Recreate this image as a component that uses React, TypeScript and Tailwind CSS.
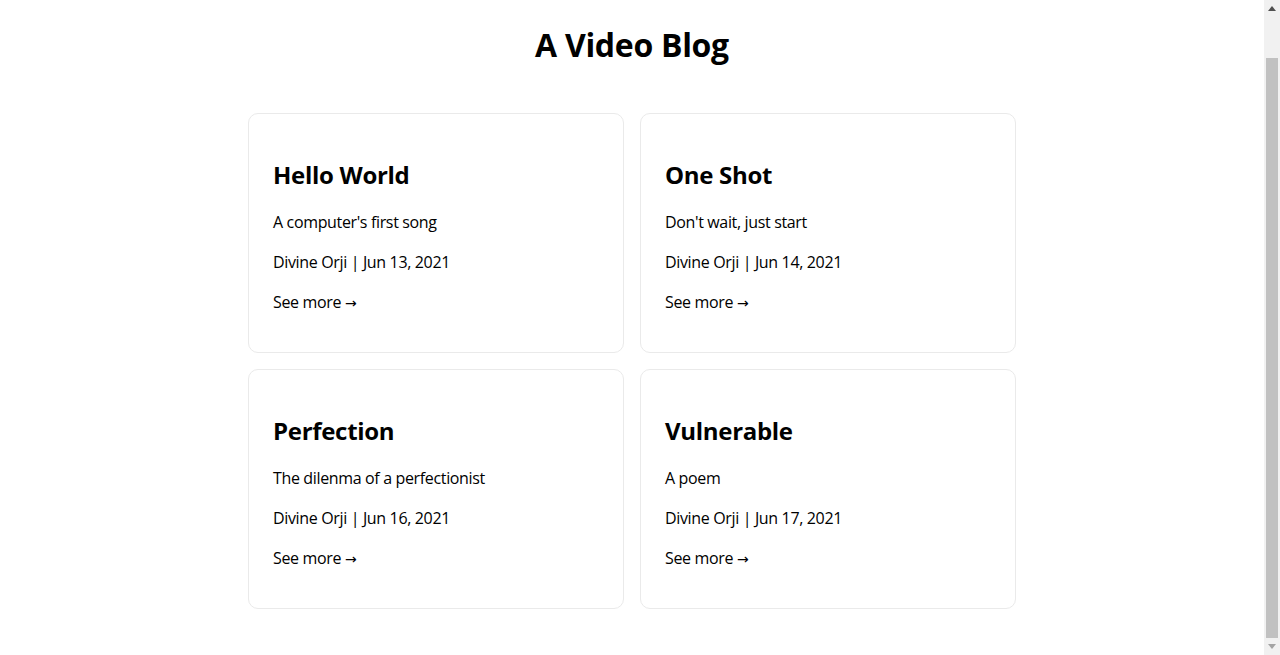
const posts = [
  { title: "Hello World", desc: "A computer's first song", date: "Jun 13, 2021" },
  { title: "One Shot", desc: "Don't wait, just start", date: "Jun 14, 2021" },
  { title: "Perfection", desc: "The dilenma of a perfectionist", date: "Jun 16, 2021" },
  { title: "Vulnerable", desc: "A poem", date: "Jun 17, 2021" },
];

function Scrollbar() {
  return (
    <div className="flex h-full w-4 shrink-0 flex-col bg-[#f1f1f1]">
      <div className="flex h-[17px] items-center justify-center">
        <svg width="8" height="5" viewBox="0 0 8 5">
          <path d="M4 0 L8 5 L0 5 Z" fill="#505050" />
        </svg>
      </div>
      <div className="h-[41px]" />
      <div className="mx-[2px] flex-1 bg-[#c1c1c1]" />
      <div className="flex h-[17px] items-center justify-center">
        <svg width="8" height="5" viewBox="0 0 8 5">
          <path d="M0 0 L8 0 L4 5 Z" fill="#a3a3a3" />
        </svg>
      </div>
    </div>
  );
}

export default function App() {
  return (
    <div className="flex h-screen bg-white font-['Open_Sans',sans-serif] text-black">
      <main className="flex flex-1 flex-col items-center overflow-hidden pt-[21px]">
        <h1 className="text-[32px] font-bold leading-[48px] tracking-[-0.3px]">
          A Video Blog
        </h1>
        <div className="mt-[44px] grid w-[768px] grid-cols-2 gap-4">
          {posts.map((post) => (
            <div
              key={post.title}
              className="rounded-[10px] border border-[#eaeaea] p-6"
            >
              <h2 className="mt-[22px] mb-5 text-2xl font-bold leading-[30px] tracking-[-0.3px]">
                {post.title}
              </h2>
              <div className="text-base leading-6 tracking-[-0.35px]">
                <p className="mb-4">{post.desc}</p>
                <p className="mb-4">Divine Orji | {post.date}</p>
                <p className="mb-[13px]">
                  See more{" "}
                  <span className="font-['DejaVu_Sans',sans-serif] text-[14px]">→</span>
                </p>
              </div>
            </div>
          ))}
        </div>
      </main>
      <Scrollbar />
    </div>
  );
}
